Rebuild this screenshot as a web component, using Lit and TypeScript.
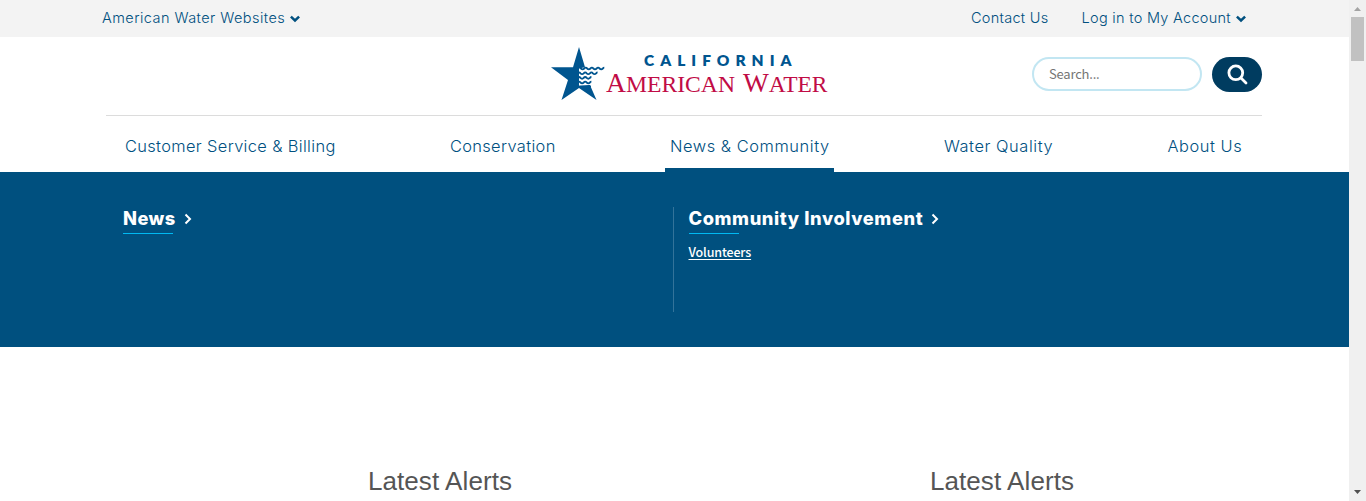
import { LitElement, html, css, svg } from "lit";
import { customElement } from "lit/decorators.js";

const chevronDown = html`<svg class="down" viewBox="0 0 12 8" width="12" height="8"><path d="M1.9 1.6 6 5.5 10.1 1.6" fill="none" stroke="#00507f" stroke-width="2.5"/></svg>`;
const chevronRight = html`<svg class="right" viewBox="0 0 8 12" width="8" height="12"><path d="M1.5 1.5 6 6 1.5 10.5" fill="none" stroke="#fff" stroke-width="2"/></svg>`;
const wave = (x: number, y: number, n: number) =>
  svg`<path d=${`M${x} ${y}` + " q.8 0 1.5 .9 q1.6 1.7 3.2 0 q.7 -.9 1.5 -.9".repeat(n)} fill="none"/>`;

@customElement("site-logo")
export class SiteLogo extends LitElement {
  static styles = css`
    :host { display: block; width: 280px; height: 56px; }
    svg { display: block; }
    .state { font: 800 15.5px Lato, sans-serif; fill: #00558f; }
    .brand { font: 28px "Liberation Serif", serif; fill: #c10c46; }
    .small { font-size: 24px; }
  `;
  render() {
    return html`<svg width="280" height="56" viewBox="550 45 280 56">
      <path d="M579 47 585 67.3 605 67.3 588 80.5 596.5 100 579 88 561.5 100 568 80 551 67.3 573 67.3Z" fill="#00558f"/>
      <path d="M579 68.5 586 67H606V74L594 84.6 579 86Z" fill="#fff"/>
      <path d="M577 85.6H591L591 87H577Z" fill="#00558f"/>
      <g stroke="#00558f" stroke-width="1.9">
        ${wave(579.5, 67.6, 4)}${wave(579, 72.4, 3)}${wave(579, 77, 2)}${wave(579, 81.6, 2)}
      </g>
      <text class="state" x="644" y="66" textLength="147.5">CALIFORNIA</text>
      <text class="brand" x="606" y="92" textLength="129" lengthAdjust="spacingAndGlyphs">A<tspan class="small">MERICAN</tspan></text>
      <text class="brand" x="743" y="92" textLength="84.5" lengthAdjust="spacingAndGlyphs">W<tspan class="small">ATER</tspan></text>
    </svg>`;
  }
}

@customElement("app-root")
export class AppRoot extends LitElement {
  static styles = css`
    :host { display: flex; height: 501px; overflow: hidden; background: #fff; font-family: Inter, sans-serif; color: #00507f; }
    * { box-sizing: border-box; }
    a { color: inherit; text-decoration: none; white-space: nowrap; }
    svg { display: block; flex: none; }
    .page { flex: 1; min-width: 0; }
    .top { height: 37px; background: #f3f3f3; display: flex; justify-content: space-between; align-items: center; padding: 0 102px 2px 102px; font-size: 14.5px; font-weight: 300; letter-spacing: .29px; }
    .top a { display: flex; align-items: center; gap: 4px; }
    .group { display: flex; gap: 33px; }
    .sites { letter-spacing: .45px; }
    .down { margin-top: 3px; }
    .head { height: 78px; display: grid; grid-template-columns: 1fr 280px 1fr; padding: 0 87px 0 106px; align-items: start; }
    .logo { grid-column: 2; margin: 8px -6px 0 6px; }
    .search { display: flex; justify-content: flex-end; gap: 10px; margin-top: 20px; }
    .field { width: 170px; height: 34px; border: 2px solid #c2e6f2; border-radius: 17px; padding: 0 15px; font: 13px/29px "Noto Sans CJK SC", sans-serif; letter-spacing: -.2px; color: #757575; }
    .go { width: 50px; height: 35px; border-radius: 17.5px; background: #003c60; display: grid; place-items: center; }
    .nav { height: 57px; margin: 0 87px 0 106px; border-top: 1px solid #dcdcdc; display: flex; justify-content: space-between; padding: 0 15px 0 14px; font-size: 16.4px; font-weight: 300; letter-spacing: .36px; }
    .nav a { padding: 0 4.7px 0 5px; line-height: 61px; height: 56px; }
    .nav .wide { letter-spacing: .57px; }
    .nav .active { border-bottom: 4px solid #00507f; }
    .mega { height: 175px; background: #00507f; color: #fff; padding: 35px 0 0 108px; display: flex; }
    .col { width: 565px; height: 105px; padding-left: 15px; }
    .col + .col { border-left: 1px solid #33739a; padding-left: 14.5px; }
    .title { display: flex; align-items: center; gap: 8px; font-size: 18.3px; font-weight: 800; line-height: 23px; letter-spacing: .4px; }
    .col + .col .title { letter-spacing: .58px; }
    .rule { width: 50px; height: 1px; background: #00b9f2; margin: 3px 0 8px; }
    .link { display: block; font: 500 12.5px/20px "Noto Sans CJK SC", sans-serif; letter-spacing: -.15px; text-decoration: underline; text-underline-offset: 2px; }
    .right { margin-top: 1px; }
    .alerts { display: grid; grid-template-columns: 562px 562px; padding: 118px 0 0 159px; text-align: center; color: #555; }
    .alerts h2 { margin: 0; font: 400 26px/32px "Liberation Sans", sans-serif; letter-spacing: .08px; }
    .bar { width: 17px; background: #f0f0f0; display: flex; flex-direction: column; align-items: center; }
    .thumb { width: 13px; height: 44px; background: #c1c1c1; margin-bottom: auto; }
  `;
  render() {
    const nav = [
      { label: "Customer Service & Billing", cls: "" },
      { label: "Conservation", cls: "" },
      { label: "News & Community", cls: "wide active" },
      { label: "Water Quality", cls: "wide" },
      { label: "About Us", cls: "wide" },
    ];
    return html`
      <div class="page">
        <div class="top">
          <a class="sites">American Water Websites ${chevronDown}</a>
          <div class="group"><a>Contact Us</a><a>Log in to My Account ${chevronDown}</a></div>
        </div>
        <div class="head">
          <site-logo class="logo"></site-logo>
          <div class="search">
            <div class="field">Search...</div>
            <div class="go"><svg width="22" height="22" viewBox="0 0 22 22" fill="none" stroke="#fff" stroke-width="2.8" stroke-linecap="round"><circle cx="9.8" cy="8.8" r="6.9"/><path d="m15 14 5 5"/></svg></div>
          </div>
        </div>
        <nav class="nav">${nav.map((n) => html`<a class=${n.cls}>${n.label}</a>`)}</nav>
        <div class="mega">
          <div class="col"><a class="title">News ${chevronRight}</a><div class="rule"></div></div>
          <div class="col"><a class="title">Community Involvement ${chevronRight}</a><div class="rule"></div><a class="link">Volunteers</a></div>
        </div>
        <div class="alerts"><h2>Latest Alerts</h2><h2>Latest Alerts</h2></div>
      </div>
      <div class="bar">
        <svg width="17" height="17" viewBox="0 0 17 17"><path d="M5 11 8.5 7 12 11Z" fill="#a3a3a3"/></svg>
        <div class="thumb"></div>
        <svg width="17" height="17" viewBox="0 0 17 17"><path d="M5 6 8.5 10 12 6Z" fill="#505050"/></svg>
      </div>`;
  }
}
